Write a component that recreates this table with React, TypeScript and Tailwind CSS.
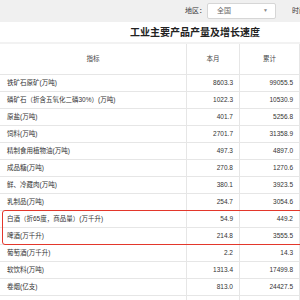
const rows: [string, string, string][] = [
  ["铁矿石原矿(万吨)", "8603.3", "99055.5"],
  ["磷矿石（折含五氧化二磷30%）(万吨)", "1022.3", "10530.9"],
  ["原盐(万吨)", "401.7", "5256.8"],
  ["饲料(万吨)", "2701.7", "31358.9"],
  ["精制食用植物油(万吨)", "497.3", "4897.0"],
  ["成品糖(万吨)", "270.8", "1270.6"],
  ["鲜、冷藏肉(万吨)", "380.1", "3923.5"],
  ["乳制品(万吨)", "254.7", "3054.6"],
  ["白酒（折65度，商品量）(万千升)", "54.9", "449.2"],
  ["啤酒(万千升)", "214.8", "3555.5"],
  ["葡萄酒(万千升)", "2.2", "14.3"],
  ["软饮料(万吨)", "1313.4", "17499.8"],
  ["卷烟(亿支)", "813.0", "24427.5"],
  ["", "", ""],
];

const cols = "grid grid-cols-[186px_53px_60px_46px_45px]";

function Row({ r }: { r: [string, string, string] }) {
  return (
    <div className={`${cols} h-[17px] border-b border-[#e6e6e6] bg-white`}>
      <div className="flex items-center pl-[7px] whitespace-nowrap">{r[0]}</div>
      <div className="flex items-center justify-end pr-[6px] border-l border-[#e6e6e6]">{r[1]}</div>
      <div className="flex items-center justify-end pr-[6px] border-l border-[#e6e6e6]">{r[2]}</div>
      <div className="border-l border-[#e6e6e6]" />
      <div className="border-l border-[#e6e6e6]" />
    </div>
  );
}

export default function App() {
  return (
    <div
      className="w-[300px] h-[300px] overflow-hidden bg-white text-[#333]"
      style={{ fontFamily: '"Liberation Sans", "Noto Sans CJK SC", sans-serif' }}
    >
      <div className="w-[390px]">
        <div className="h-[22px] bg-[#f0f0f0] flex items-center pl-[185px] text-[7px]">
          <span className="w-[22px]">地区：</span>
          <div className="w-[69px] h-[16px] bg-white border border-[#d6d6d6] rounded-[2px] flex items-center justify-between pl-[9px] pr-[7px] text-[#666]">
            <span>全国</span>
            <span className="text-[5px] text-[#888]">▼</span>
          </div>
          <span className="ml-[16px]">时间：</span>
        </div>
        <div className="h-[20px] flex items-center justify-center text-[10px] font-bold text-[#222]">
          工业主要产品产量及增长速度
        </div>
        <div className="border-t-2 border-[#f2f2f2] text-[6.5px]">
          <div className={`${cols} h-[31px] border-b border-[#e6e6e6] text-[#444]`}>
            <div className="flex items-center justify-center">指标</div>
            <div className="flex items-center justify-center border-l border-[#e6e6e6]">本月</div>
            <div className="flex items-center justify-center border-l border-[#e6e6e6]">累计</div>
            <div className="border-l border-[#e6e6e6]" />
            <div className="border-l border-[#e6e6e6]" />
          </div>
          {rows.slice(0, 8).map((r, i) => (
            <Row key={i} r={r} />
          ))}
          <div className="relative">
            <Row r={rows[8]} />
            <Row r={rows[9]} />
            <div className="absolute left-[2px] right-[-10px] top-[-1px] bottom-0 border-[1.5px] border-[#e3372b] rounded-[3px]" />
          </div>
          {rows.slice(10).map((r, i) => (
            <Row key={i} r={r} />
          ))}
        </div>
      </div>
    </div>
  );
}
